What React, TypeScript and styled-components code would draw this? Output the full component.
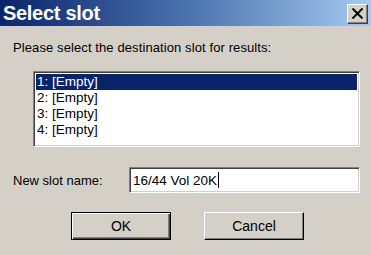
import React from "react";
import styled, { createGlobalStyle } from "styled-components";

const Global = createGlobalStyle`
  html, body { margin: 0; padding: 0; background: #d4d0c8; }
  * { box-sizing: border-box; }
`;

const Window = styled.div`
  width: 371px;
  height: 255px;
  background: #d4d0c8;
  display: flex;
  flex-direction: column;
  font-family: "Liberation Sans", Arial, sans-serif;
  font-size: 13px;
  color: #000;
  overflow: hidden;
`;

const TitleBar = styled.div`
  height: 26px;
  flex: none;
  display: flex;
  align-items: center;
  justify-content: space-between;
  padding: 0 3px 0 3px;
  background: linear-gradient(to right, #0a246a 0%, #4a72ad 50%, #a6caf0 100%);
`;

const Title = styled.div`
  color: #fff;
  font-weight: bold;
  font-size: 20px;
  letter-spacing: -0.3px;
  line-height: 26px;
`;

const CloseButton = styled.div`
  width: 21px;
  height: 20px;
  margin-top: 1px;
  background: #d4d0c8;
  border-top: 1px solid #fff;
  border-left: 1px solid #fff;
  border-right: 1px solid #404040;
  border-bottom: 1px solid #404040;
  box-shadow: inset -1px -1px 0 #808080;
  display: flex;
  align-items: center;
  justify-content: center;
`;

const Content = styled.div`
  flex: 1;
  display: flex;
  flex-direction: column;
  padding: 14px 11px 0 13px;
`;

const Prompt = styled.div`
  height: 16px;
  line-height: 16px;
  letter-spacing: 0.1px;
`;

const ListBox = styled.div`
  margin: 15px 0 0 20px;
  width: 327px;
  height: 76px;
  background: #fff;
  border-top: 1px solid #808080;
  border-left: 1px solid #808080;
  border-right: 1px solid #fff;
  border-bottom: 1px solid #fff;
  box-shadow: inset 1px 1px 0 #404040, inset -1px -1px 0 #d4d0c8;
  padding: 2px;
  display: flex;
  flex-direction: column;
`;

const ListItem = styled.div<{ $selected?: boolean }>`
  height: 16px;
  line-height: 16px;
  padding-left: 1px;
  font-size: 13.5px;
  background: ${(p) => (p.$selected ? "#0a246a" : "transparent")};
  color: ${(p) => (p.$selected ? "#fff" : "#000")};
`;

const NameRow = styled.div`
  margin-top: 20px;
  display: flex;
  align-items: center;
`;

const NameLabel = styled.div`
  width: 116px;
`;

const TextInput = styled.div`
  width: 231px;
  height: 26px;
  background: #fff;
  border-top: 1px solid #808080;
  border-left: 1px solid #808080;
  border-right: 1px solid #fff;
  border-bottom: 1px solid #fff;
  box-shadow: inset 1px 1px 0 #404040, inset -1px -1px 0 #d4d0c8;
  padding-left: 3px;
  display: flex;
  align-items: center;
  font-size: 13.5px;
`;

const Caret = styled.span`
  display: inline-block;
  width: 1px;
  height: 16px;
  background: #000;
  margin-left: 1px;
`;

const ButtonRow = styled.div`
  margin-top: 19px;
  display: flex;
  padding-left: 58px;
  gap: 33px;
`;

const Button = styled.div<{ $default?: boolean }>`
  width: 100px;
  height: 28px;
  background: #d4d0c8;
  display: flex;
  align-items: center;
  justify-content: center;
  font-size: 14px;
  border-top: 1px solid ${(p) => (p.$default ? "#000" : "#fff")};
  border-left: 1px solid ${(p) => (p.$default ? "#000" : "#fff")};
  border-right: 1px solid #000;
  border-bottom: 1px solid #000;
  box-shadow: ${(p) =>
    p.$default
      ? "inset 1px 1px 0 #fff, inset -1px -1px 0 #404040, inset -2px -2px 0 #808080"
      : "inset -1px -1px 0 #808080"};
`;

export default function App() {
  return (
    <>
      <Global />
      <Window>
        <TitleBar>
          <Title>Select slot</Title>
          <CloseButton>
            <svg width="13" height="11" viewBox="0 0 13 11">
              <path d="M1.5 0.5 L11.5 10.5 M11.5 0.5 L1.5 10.5" stroke="#000" strokeWidth="2" />
            </svg>
          </CloseButton>
        </TitleBar>
        <Content>
          <Prompt>Please select the destination slot for results:</Prompt>
          <ListBox>
            <ListItem $selected>1: [Empty]</ListItem>
            <ListItem>2: [Empty]</ListItem>
            <ListItem>3: [Empty]</ListItem>
            <ListItem>4: [Empty]</ListItem>
          </ListBox>
          <NameRow>
            <NameLabel>New slot name:</NameLabel>
            <TextInput>
              16/44 Vol 20K<Caret />
            </TextInput>
          </NameRow>
          <ButtonRow>
            <Button $default>OK</Button>
            <Button>Cancel</Button>
          </ButtonRow>
        </Content>
      </Window>
    </>
  );
}
